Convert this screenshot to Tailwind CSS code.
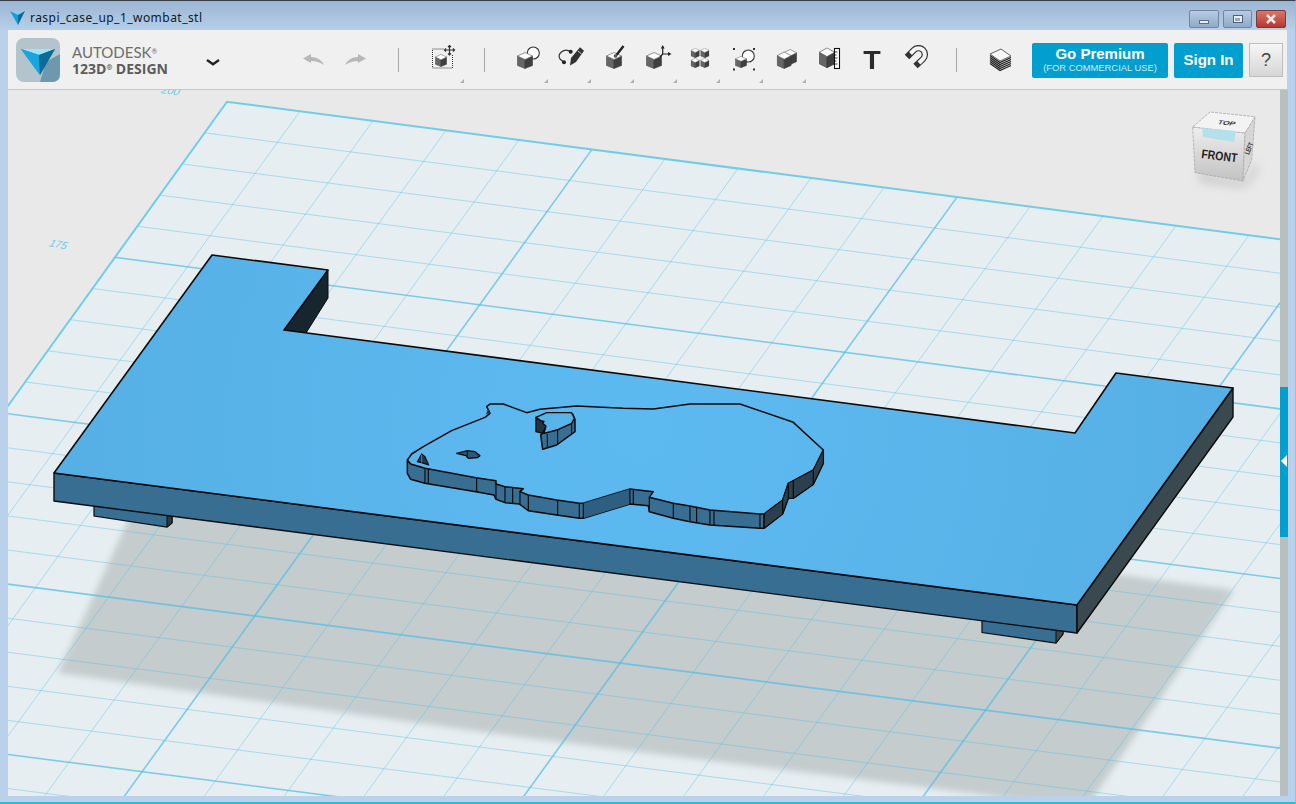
<!DOCTYPE html>
<html lang="en">
<head>
  <meta charset="UTF-8">
  <title>raspi_case_up_1_wombat_stl</title>
  <script src="https://cdn.jsdelivr.net/npm/@tailwindcss/browser@4"></script>
</head>
<body class="bg-[#b9d1ea] overflow-hidden">

  <!-- shared shapes for the toolbar icons -->
  <svg class="hidden">
    <symbol id="cube" viewBox="0 0 16 17" preserveAspectRatio="none">
      <path d="M0.5 4 L8 7.5 L8 16.5 L0.5 13.5 Z" fill="#666" stroke="#4a4a4a" stroke-width=".6"/>
      <path d="M15.5 4 L8 7.5 L8 16.5 L15.5 13.5 Z" fill="#3f3f3f" stroke="#3a3a3a" stroke-width=".6"/>
      <path d="M8 0.5 L15.5 4 L8 7.5 L0.5 4 Z" fill="#fff" stroke="#666" stroke-width=".7"/>
    </symbol>
  </svg>

  <div class="w-[1296px] h-[804px] flex flex-col border-t border-b-2 border-t-[#3a4048] border-b-[#17c3dd] border-r border-r-[#7fc8e8] font-['Open_Sans',sans-serif]">

    <!-- title bar -->
    <div class="h-[29px] shrink-0 flex items-start pl-[10px] bg-gradient-to-b from-[#9bb6d3] to-[#b7cfe8]">
      <svg class="mt-[10px]" width="16" height="14" viewBox="0 0 16 14">
        <path d="M0 0 L15 0 L8 4 Z" fill="#7fd0ee"/>
        <path d="M0 0 L8 4 L8 14 Z" fill="#12a0d8"/>
        <path d="M15 0 L8 4 L8 14 Z" fill="#0a6c98"/>
      </svg>
      <span class="ml-1 mt-[9px] text-[12px] leading-4 tracking-[0.46px] text-[#0c1a2c] font-['Noto_Sans',sans-serif]">raspi_case_up_1_wombat_stl</span>
      <div class="ml-auto mr-[9px] mt-[9px] flex gap-1">
        <div class="w-[30px] h-[18px] rounded-[2px] border border-[#6f86a3] bg-gradient-to-b from-[#b9cce2] to-[#8fa9c8] flex items-end justify-center pb-[3px]">
          <div class="w-[10px] h-[4px] bg-[#e8eef5] border border-[#5c6d84]"></div>
        </div>
        <div class="w-[29px] h-[18px] rounded-[2px] border border-[#6f86a3] bg-gradient-to-b from-[#b9cce2] to-[#8fa9c8] flex items-center justify-center">
          <div class="w-[10px] h-[8px] bg-[#e8eef5] border border-[#4f5f75] p-[1.5px]"><div class="w-full h-full bg-[#8fa9c8]"></div></div>
        </div>
        <div class="w-[30px] h-[18px] rounded-[2px] border border-[#7a3a36] bg-gradient-to-b from-[#d9766b] to-[#b5372c] flex items-center justify-center">
          <svg width="12" height="10" viewBox="0 0 12 10"><path d="M2 1 L10 9 M10 1 L2 9" stroke="#f6ecea" stroke-width="2.6"/></svg>
        </div>
      </div>
    </div>

    <!-- toolbar -->
    <div class="h-[60px] shrink-0 mx-[8px] bg-[#f0f0f0] border-b border-[#c6c6c6] flex items-center">
      <svg class="ml-[8px]" width="44" height="44" viewBox="0 0 44 44">
        <rect width="44" height="44" rx="8" fill="#b3c4cd"/>
        <path d="M24 44 L36 44 Q44 44 44 36 L44 16 L30 24 Z" fill="#6f98ad"/>
        <path d="M5 11 L39 11 L24 37 Z" fill="#0e8dc4"/>
        <path d="M5 11 L39 11 L23 17 Z" fill="#9fe3f6"/>
        <path d="M5 11 L23 17 L24 37 Z" fill="#17a6df"/>
        <path d="M39 11 L23 17 L24 37 Z" fill="#0b6b97"/>
      </svg>
      <div class="ml-[12px] w-[134px] flex flex-col">
        <span class="mt-[1px] text-[15px] leading-[17px] text-[#6d6d6d] font-['Lato',sans-serif]">AUTODESK<sup class="text-[7px]">®</sup></span>
        <span class="text-[14px] leading-[16px] font-bold text-[#5c5c5c]">123D<sup class="text-[7px]">®</sup> DESIGN</span>
      </div>
      <svg class="mt-[6px]" width="14" height="7" viewBox="0 0 14 7"><path d="M1 1 L7 5.2 L13 1" fill="none" stroke="#222" stroke-width="2.4"/></svg>

      <!-- undo, redo -->
      <svg class="ml-[83px]" width="21" height="11" viewBox="0 0 21 11"><path d="M0 4.5 L8 0 L8 3 Q17 3 21 11 Q15 7 8 7 L8 9 Z" fill="#b8b8b8"/></svg>
      <svg class="ml-[21px]" width="21" height="11" viewBox="0 0 21 11"><path d="M21 4.5 L13 0 L13 3 Q4 3 0 11 Q6 7 13 7 L13 9 Z" fill="#b8b8b8"/></svg>
      <div class="ml-[32px] w-px h-[24px] bg-[#a8a8a8]"></div>

      <!-- select / move -->
      <div class="relative ml-[29px] w-[30px] h-[30px]">
        <svg width="30" height="30" viewBox="0 0 30 30">
          <rect x="4.5" y="4" width="20" height="19" fill="none" stroke="#333" stroke-width="1" stroke-dasharray="1 1"/>
          <use href="#cube" x="7" y="9" width="12" height="13"/>
          <rect x="16" y="0" width="11" height="10" fill="#f0f0f0"/>
          <path d="M21.5 0.5 V10 M16.5 5 H26.5 M20 2 L21.5 0.5 L23 2 M20 8.5 L21.5 10 L23 8.5 M18 3.5 L16.5 5 L18 6.5 M25 3.5 L26.5 5 L25 6.5" fill="none" stroke="#333" stroke-width="1.2"/>
        </svg>
        <div class="absolute left-[32px] top-[34px] w-0 h-0 border-l-[4px] border-l-transparent border-b-[4px] border-b-[#b0b0b0]"></div>
      </div>
      <div class="ml-[26px] w-px h-[24px] bg-[#a8a8a8]"></div>

      <!-- modelling tools, one every 43px -->
      <div class="ml-[21px] flex">
        <div class="relative w-[43px] h-[30px] flex justify-center">
          <svg width="30" height="30" viewBox="0 0 30 30">
            <circle cx="20.3" cy="8" r="6" fill="#fff" stroke="#333" stroke-width="1.1"/>
            <use href="#cube" x="4" y="7" width="16" height="17"/>
          </svg>
          <div class="absolute left-[38px] top-[34px] w-0 h-0 border-l-[4px] border-l-transparent border-b-[4px] border-b-[#b0b0b0]"></div>
        </div>
        <div class="relative w-[43px] h-[30px] flex justify-center">
          <svg width="30" height="30" viewBox="0 0 30 30">
            <path d="M14.7 6.7 C8 2 1 9 4 14 L8 17.5" fill="none" stroke="#333" stroke-width="1.2"/>
            <circle cx="14.7" cy="6.7" r="2" fill="#222"/>
            <circle cx="8" cy="17.3" r="2" fill="#222"/>
            <path d="M14 20.5 L15 13 L24 2.3 L28 5.7 L20 17 Z" fill="#333"/>
            <path d="M22 6 L25.5 9" stroke="#f0f0f0" stroke-width=".8"/>
          </svg>
          <div class="absolute left-[38px] top-[34px] w-0 h-0 border-l-[4px] border-l-transparent border-b-[4px] border-b-[#b0b0b0]"></div>
        </div>
        <div class="relative w-[43px] h-[30px] flex justify-center">
          <svg width="30" height="30" viewBox="0 0 30 30">
            <use href="#cube" x="7" y="7" width="16" height="17"/>
            <path d="M17.5 10 L24.5 1" stroke="#222" stroke-width="2.4"/>
            <circle cx="16.5" cy="11" r="1.8" fill="#555"/>
          </svg>
          <div class="absolute left-[38px] top-[34px] w-0 h-0 border-l-[4px] border-l-transparent border-b-[4px] border-b-[#b0b0b0]"></div>
        </div>
        <div class="relative w-[43px] h-[30px] flex justify-center">
          <svg width="30" height="30" viewBox="0 0 30 30">
            <use href="#cube" x="4" y="7" width="16" height="17"/>
            <path d="M20.7 9 V1.5 M20.7 9 H28 M20.7 9 L18 12" stroke="#222" stroke-width="1.2"/>
            <path d="M20.7 0 L18.8 3.5 H22.6 Z M29.5 9 L26 7.1 V10.9 Z" fill="#222"/>
          </svg>
          <div class="absolute left-[38px] top-[34px] w-0 h-0 border-l-[4px] border-l-transparent border-b-[4px] border-b-[#b0b0b0]"></div>
        </div>
        <div class="relative w-[43px] h-[30px] flex justify-center">
          <svg width="30" height="30" viewBox="0 0 30 30">
            <use href="#cube" x="5.7" y="3" width="9" height="10"/>
            <use href="#cube" x="15.3" y="3" width="9" height="10"/>
            <use href="#cube" x="5.7" y="13" width="9" height="10"/>
            <use href="#cube" x="15.3" y="13" width="9" height="10"/>
          </svg>
          <div class="absolute left-[38px] top-[34px] w-0 h-0 border-l-[4px] border-l-transparent border-b-[4px] border-b-[#b0b0b0]"></div>
        </div>
        <div class="relative w-[43px] h-[30px] flex justify-center">
          <svg width="30" height="30" viewBox="0 0 30 30">
            <path d="M5 3 h2 v2 h-2 Z M25 3 h2 v2 h-2 Z M5 23.5 h2 v2 h-2 Z M25 23.5 h2 v2 h-2 Z" fill="#333"/>
            <circle cx="20.3" cy="11" r="6" fill="#fff" stroke="#333" stroke-width="1.1"/>
            <use href="#cube" x="7" y="11" width="12" height="12"/>
          </svg>
          <div class="absolute left-[38px] top-[34px] w-0 h-0 border-l-[4px] border-l-transparent border-b-[4px] border-b-[#b0b0b0]"></div>
        </div>
        <div class="relative w-[43px] h-[30px] flex justify-center">
          <svg width="30" height="30" viewBox="0 0 30 30">
            <use href="#cube" x="12" y="4" width="14" height="16"/>
            <use href="#cube" x="5.7" y="6.5" width="15" height="17.5"/>
          </svg>
          <div class="absolute left-[38px] top-[34px] w-0 h-0 border-l-[4px] border-l-transparent border-b-[4px] border-b-[#b0b0b0]"></div>
        </div>
        <div class="relative w-[43px] h-[30px] flex justify-center">
          <svg width="30" height="30" viewBox="0 0 30 30">
            <use href="#cube" x="5" y="2.3" width="16" height="21"/>
            <rect x="20.5" y="3.5" width="5" height="20" fill="#fff" stroke="#111" stroke-width="1.1"/>
            <path d="M20.5 7 h3 M20.5 10 h2 M20.5 13 h3 M20.5 16 h2 M20.5 19 h3" stroke="#111" stroke-width=".8"/>
          </svg>
        </div>
        <div class="w-[43px] h-[30px] flex items-center justify-center">
          <span class="scale-x-110 text-[26px] leading-none font-bold text-[#2b2b2b] font-['Liberation_Sans',sans-serif]">T</span>
        </div>
        <div class="w-[43px] h-[30px] flex justify-center">
          <svg width="30" height="30" viewBox="0 0 30 30">
            <path d="M7 12 L14 5 A6.3 6.3 0 0 1 23 14 L15.5 21" fill="none" stroke="#333" stroke-width="6.4"/>
            <path d="M10.5 8.5 L14 5 A6.3 6.3 0 0 1 23 14 L19 18" fill="none" stroke="#f4f4f4" stroke-width="4"/>
          </svg>
        </div>
      </div>
      <div class="ml-[20px] w-px h-[24px] bg-[#a8a8a8]"></div>

      <!-- layers -->
      <svg class="ml-[29px]" width="30" height="30" viewBox="0 0 30 30">
        <path d="M4 9 L14 16 L25 11 V20 L14 25 L4 18 Z" fill="#ddd"/>
        <path d="M4 10.5 L14 17.5 L25 12.5 M4 12.5 L14 19.5 L25 14.5 M4 14.5 L14 21.5 L25 16.5 M4 16.5 L14 23.5 L25 18.5 M4 18.5 L14 25.5 L25 20.5" fill="none" stroke="#222" stroke-width="1.2"/>
        <path d="M4 9 L15 4 L25 11 L14 16 Z" fill="#f8f8f8" stroke="#555" stroke-width=".9"/>
      </svg>

      <!-- account buttons -->
      <div class="ml-[16px] mt-[1px] w-[136px] h-[35px] rounded-[2px] bg-[#009fd0] flex flex-col items-center justify-center text-white font-['Liberation_Sans',sans-serif]">
        <span class="text-[15px] leading-[16px] font-bold">Go Premium</span>
        <span class="text-[9.4px] leading-[12px] text-[#cdeaf5]">(FOR COMMERCIAL USE)</span>
      </div>
      <div class="ml-[6px] mt-[1px] w-[69px] h-[35px] rounded-[2px] bg-[#009fd0] flex items-center justify-center text-white text-[15px] font-bold font-['Liberation_Sans',sans-serif]">Sign In</div>
      <div class="ml-[6px] mt-[1px] w-[34px] h-[34px] border border-[#bdbdbd] bg-gradient-to-b from-[#f6f6f6] to-[#d6d6d6] flex items-center justify-center text-[18px] text-[#444] font-['Liberation_Sans',sans-serif]">?</div>
    </div>

    <!-- 3D view and side rail -->
    <div class="flex pl-[8px]">
      <svg id="view" class="block bg-[#e9e9e9]" width="1272" height="706" viewBox="8 90 1272 706">
        <defs>
          <clipPath id="plate"><path d="M227 101.7 L1290 240.6 V800 H0 V417 Z"/></clipPath>
          <filter id="soft" x="-5%" y="-5%" width="110%" height="110%"><feGaussianBlur stdDeviation="3"/></filter>
          <filter id="softer" x="-30%" y="-30%" width="160%" height="160%"><feGaussianBlur stdDeviation="5"/></filter>
          <radialGradient id="face" gradientUnits="userSpaceOnUse" cx="640" cy="430" r="560">
            <stop offset="0" stop-color="#5dbaf0"/><stop offset="1" stop-color="#56b0e6"/>
          </radialGradient>
          <linearGradient id="cubeFront" x1="0" y1="0" x2="0" y2="1">
            <stop offset="0" stop-color="#eeeeee"/><stop offset="1" stop-color="#c2c2c2"/>
          </linearGradient>
        </defs>

        <path d="M227 101.7 L1290 240.6 V800 H0 V417 Z" fill="#e6eef1"/>
        <path d="M58 673 L165 440 L1157 580 L1234 590 L1085 810 L970 793 L490 733 Z" fill="#c4cccd" filter="url(#soft)" clip-path="url(#plate)"/>
        <g id="grid" clip-path="url(#plate)"></g>
        <path d="M0 417 L227 101.7 L1290 240.6" fill="none" stroke="#70cdea" stroke-width="2"/>

        <text transform="translate(160 93) rotate(8) skewX(-20)" font-family="Liberation Sans" font-size="11" fill="#6fcbe8">200</text>
        <text transform="translate(48 246) rotate(11) skewX(-20)" font-family="Liberation Sans" font-size="10.5" fill="#6fcbe8">175</text>

        <!-- feet -->
        <path d="M94 500 V516 L167 527 L172 523 V510 Z" fill="#386e92" stroke="#0c0c0c" stroke-width="1.2"/>
        <path d="M167 515 V527 L172 523 V512 Z" fill="#2c3a42" stroke="#0c0c0c" stroke-width="1"/>
        <path d="M982 615 V632.5 L1056 643 L1063 634 V625 Z" fill="#386e92" stroke="#0c0c0c" stroke-width="1.2"/>
        <path d="M1056 628 V643 L1063 634 V625 Z" fill="#3a4a50" stroke="#0c0c0c" stroke-width="1"/>

        <!-- plate -->
        <path d="M54 473 L1077 605 V633 L54 501 Z" fill="#386e92" stroke="#0a0a0a" stroke-width="1.4" stroke-linejoin="round"/>
        <path d="M1233 388 V417 L1077 633 V605 Z" fill="#39494f" stroke="#0a0a0a" stroke-width="1.4" stroke-linejoin="round"/>
        <path d="M328 270 V298 L306 333 L284 330 Z" fill="#17262e" stroke="#0a0a0a" stroke-width="1"/>
        <path d="M212 255 L328 270 L284 330 L1075 433 L1116 373 L1233 388 L1077 605 L54 473 Z" fill="url(#face)" stroke="#0a0a0a" stroke-width="1.6" stroke-linejoin="round"/>

        <!-- wombat relief, drawn in the coordinates of a 3x crop -->
        <g transform="translate(390 390) scale(.3333)" stroke-linejoin="round">
          <path d="M52 210 L62 222 L105 235 L258 263 L318 272 L318 282 L345 290 L400 296 L390 305 L415 315 L500 330 L568 340 L580 340 L720 297 L790 305 L778 322 L850 340 L900 348 L960 360 L1110 372 L1122 372 L1178 330 L1195 280 L1270 240 L1300 180 L1300 220 L1270 283 L1210 325 L1195 325 L1178 372 L1122 415 L1110 415 L960 405 L900 395 L850 385 L778 365 L775 347 L720 342 L580 385 L568 385 L500 375 L415 362 L388 342 L345 338 L318 328 L312 315 L258 305 L105 280 L62 268 L52 250 Z" fill="#386e92" stroke="#0a0a0a" stroke-width="4.5"/>
          <path d="M580 340 L720 297 V342 L580 385 Z" fill="#2f5f80"/>
          <path d="M1122 372 L1178 330 L1195 280 L1270 240 L1300 180 V220 L1270 283 L1210 325 L1195 325 L1178 372 L1122 415 Z" fill="#2b3f4c" stroke="#0a0a0a" stroke-width="3"/>
          <path d="M105 235 V280 M115 237 V281 M260 263 V305 M318 282 V326 M345 290 V338 M368 293 V340 M390 305 V345 M415 315 V362 M503 331 V376 M568 340 V385 M580 340 V385 M720 297 V342 M730 298 V343 M778 322 V365 M850 340 V385 M900 348 V395 M920 350 V398 M960 360 V405 M972 362 V406 M1110 372 V415 M1122 372 V415 M1178 330 V372 M1195 280 V325 M1210 272 V325 M1270 240 V283" fill="none" stroke="#0a0a0a" stroke-width="3.4"/>
          <path d="M52 210 L65 192 L100 170 L185 122 L285 82 L300 70 L290 50 L300 42 L340 42 L410 68 L450 58 L560 48 L700 55 L790 57 L900 42 L1050 42 L1210 97 L1300 180" fill="none" stroke="#0a0a0a" stroke-width="4.5"/>
          <path d="M288 72 L300 70 L296 55 Z" fill="#1d2b33"/>
          <!-- ear -->
          <path d="M438 82 V125 L458 130 L470 105 L455 92 Z" fill="#22343f" stroke="#0a0a0a" stroke-width="4"/>
          <path d="M548 72 L555 88 V125 L500 165 L458 178 L452 135 L460 128 L500 120 L545 100 Z" fill="#386e92" stroke="#0a0a0a" stroke-width="4.5"/>
          <path d="M472 132 V172 M503 120 V165 M545 100 V132" stroke="#0a0a0a" stroke-width="3" fill="none"/>
          <path d="M438 82 L470 68 L545 68 L553 85 L545 100 L500 120 L462 130 L468 108 L458 100 L462 94 L452 92 Z" fill="url(#face)" stroke="#0a0a0a" stroke-width="4"/>
          <!-- eye and nose -->
          <path d="M200 190 L232 182 L255 185 L270 197 L262 203 L235 205 L228 197 Z" fill="#2c5878" stroke="#0a0a0a" stroke-width="3.8"/>
          <path d="M232 183 V204" stroke="#0a0a0a" stroke-width="3"/>
          <path d="M82 215 L95 192 L105 200 L116 225 L95 218 Z" fill="#22384a" stroke="#0a0a0a" stroke-width="3.4"/>
          <path d="M95 195 V218" stroke="#4d7f9f" stroke-width="3"/>
        </g>

        <!-- view cube -->
        <path d="M1197 172 L1244 182 L1256 162 L1258 172 L1244 188 L1200 182 Z" fill="#9a9a9a" opacity=".4" filter="url(#softer)"/>
        <path d="M1192.7 127 L1245 133 L1243 181 L1195 172.7 Z" fill="url(#cubeFront)" stroke="#a8a8a8" stroke-dasharray="3 1" stroke-width=".8"/>
        <path d="M1245 133 L1255 116.7 L1251.7 160 L1243 181 Z" fill="#d6d6d6" stroke="#a8a8a8" stroke-dasharray="3 1" stroke-width=".8"/>
        <path d="M1192.7 127 L1210 112 L1255 116.7 L1245 133 Z" fill="#f3f3f3" stroke="#a8a8a8" stroke-dasharray="3 1" stroke-width=".8"/>
        <path d="M1202 128 L1236 131 L1234 142 L1203 137 Z" fill="#b4e0ec"/>
        <text transform="translate(1217 124) rotate(6) skewX(-25) scale(1 .7)" font-family="Liberation Sans" font-weight="bold" font-size="8.5" fill="#333">TOP</text>
        <text transform="translate(1201 158) rotate(7)" font-family="Liberation Sans" font-weight="bold" font-size="12.5" textLength="36" lengthAdjust="spacingAndGlyphs" fill="#222">FRONT</text>
        <text transform="translate(1249 155) rotate(-68) scale(.7 1)" font-family="Liberation Sans" font-weight="bold" font-size="7" fill="#333">LEFT</text>
      </svg>

      <div class="w-[8px] h-[706px] bg-[#b8c0bf] pt-[297px]">
        <div class="h-[150px] bg-[#009fd0] flex items-center justify-center">
          <div class="mt-[-2px] w-0 h-0 border-y-[6px] border-y-transparent border-r-[6px] border-r-white"></div>
        </div>
      </div>
    </div>
  </div>

  <script>
    // grid of the build plate: k runs across, i runs away from the viewer
    const grid = document.getElementById('grid');

    function addLine(x1, y1, x2, y2, thick) {
      const line = document.createElementNS('http://www.w3.org/2000/svg', 'line');
      line.setAttribute('x1', x1);
      line.setAttribute('y1', y1);
      line.setAttribute('x2', x2);
      line.setAttribute('y2', y2);
      line.setAttribute('stroke', '#50bee6');
      line.setAttribute('stroke-width', thick ? 1.6 : 1);
      line.setAttribute('stroke-opacity', thick ? 0.72 : 0.42);
      grid.appendChild(line);
    }

    for (let k = 1; k <= 21; k++) {
      addLine(0, 73.1 + 34.07 * k - 1.05, 1290, 239.3 + 33.92 * k + 1.3, k % 5 === 0);
    }
    for (let i = 1; i <= 20; i++) {
      const sx = 227 + 73 * i;
      const sy = 101.7 + 9.54 * i;
      addLine(sx, sy, sx - 0.723 * (800 - sy), 800, i % 5 === 0);
    }
  </script>
</body>
</html>
